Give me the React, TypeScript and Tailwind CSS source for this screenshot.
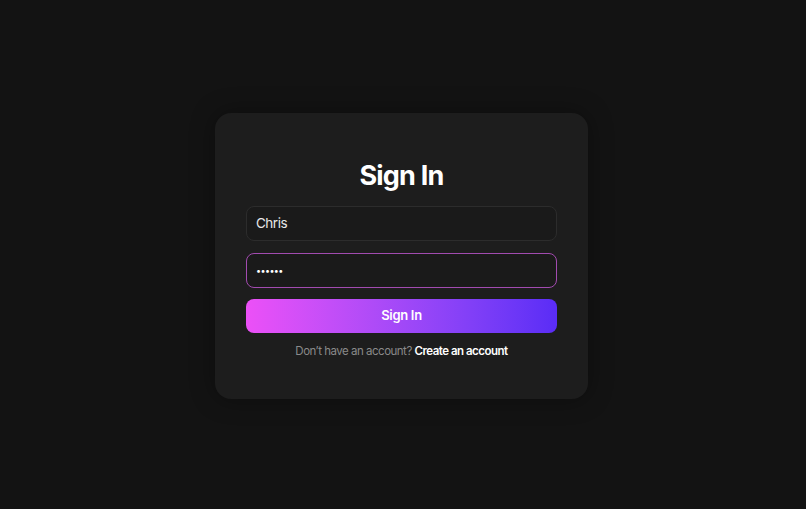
import { useState } from 'react'

export default function App() {
    const [username, setUsername] = useState('Chris')
    const [password, setPassword] = useState('secret')

    return (
        <div className="min-h-screen w-full bg-[#131313] flex items-center justify-center pr-[3px] pt-[2px] font-['Inter','Liberation_Sans',sans-serif]">
            <div className="w-[373px] bg-[#1d1d1d] rounded-2xl px-[31px] pt-[45px] pb-[39px] shadow-[0_0_24px_rgba(0,0,0,0.35)]">
                {/* Title */}
                <h1 className="text-[27px] leading-[36px] font-bold text-white text-center tracking-[-0.8px]">Sign In</h1>

                <form className="mt-[12px] flex flex-col" onSubmit={(e) => e.preventDefault()}>
                    <input
                        type="text"
                        value={username}
                        onChange={(e) => setUsername(e.target.value)}
                        className="h-[35px] w-full bg-[#1a1a1a] border border-[#2c2c2c] rounded-lg px-[9px] text-[13.5px] tracking-[-0.5px] text-[#e8e8e8] outline-none"
                    />
                    <input
                        type="password"
                        value={password}
                        onChange={(e) => setPassword(e.target.value)}
                        className="mt-[12px] h-[35px] w-full bg-[#1a1a1a] border border-[#a24bb0] rounded-lg px-[9px] text-[9px] tracking-[-0.6px] text-white outline-none"
                    />
                    <button
                        type="submit"
                        className="mt-[11px] h-[34px] w-full rounded-lg bg-gradient-to-r from-[#ec50f7] to-[#5a2cf6] text-white text-[13px] tracking-[-0.3px] font-semibold"
                    >
                        Sign In
                    </button>
                </form>

                {/* Footer */}
                <p className="mt-[9px] text-center text-[11.5px] leading-[18px] tracking-[-0.5px] text-[#8a8a8a]">
                    Don’t have an account? <a className="text-white font-semibold">Create an account</a>
                </p>
            </div>
        </div>
    )
}
